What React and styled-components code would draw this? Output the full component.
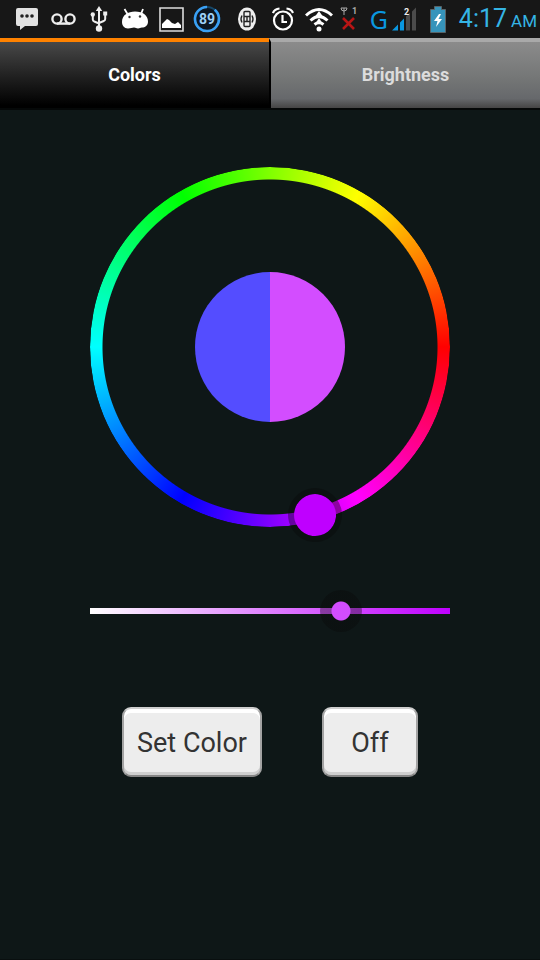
import React, { useState } from "react";
import styled, { createGlobalStyle } from "styled-components";

const GlobalStyle = createGlobalStyle`
  * { box-sizing: border-box; }
  body {
    margin: 0;
    background: #0e1717;
    font-family: Roboto, "Noto Sans", sans-serif;
  }
`;

const Screen = styled.div`
  display: flex;
  flex-direction: column;
  min-height: 100vh;
  background: #0e1717;
  border-bottom: 1px solid #090f0f;
`;

const StatusBar = styled.header`
  display: flex;
  justify-content: space-between;
  height: 38px;
  padding: 0 3px 0 9px;
  background: #171717;
  overflow: hidden;
`;

const StatusGroup = styled.div`
  display: flex;
  align-items: center;
`;

const Cell = styled.div`
  flex: none;
  display: flex;
  align-items: center;
  justify-content: ${(p) => p.$align || "center"};
  width: ${(p) => p.$width || 36}px;
  height: 38px;
`;

const Glyph = styled.svg`
  display: block;
  flex: none;
  font-family: Roboto, sans-serif;
`;

const Network = styled.span`
  width: 22px;
  font: 25px/34px "Noto Sans", sans-serif;
  color: #0a97e0;
`;

const Clock = styled.time`
  display: flex;
  align-items: baseline;
  gap: 4px;
  font-size: 25px;
  line-height: 38px;
  padding-top: 2px;
  color: #35b5e5;
`;

const Meridiem = styled.span`
  font-size: 17px;
`;

const TabBar = styled.div`
  display: flex;
  height: 72px;
  padding-bottom: 2px;
  background: #050808;
`;

const Tab = styled.button`
  flex: 1 1 0;
  height: 70px;
  padding: 0 0 1px;
  border: 0;
  border-top: 4px solid ${(p) => (p["aria-selected"] ? "#ff8200" : "#a9a9a9")};
  background: ${(p) =>
    p["aria-selected"]
      ? "linear-gradient(#484848, #222 50%, #000 96%)"
      : "linear-gradient(#8b8b8b, #747676 55%, #66686b 86%, #454545 100%)"};
  color: ${(p) => (p["aria-selected"] ? "#fff" : "#dcdcdc")};
  font: bold 18px/24px Roboto, sans-serif;

  & + & {
    border-left: 2px solid #000;
  }
`;

const Picker = styled.main`
  display: flex;
  flex-direction: column;
  align-items: center;
  padding: 57px 24px 24px;
`;

const Wheel = styled.div`
  position: relative;
  display: grid;
  place-items: center;
  width: 360px;
  height: 360px;
`;

const Ring = styled.div`
  grid-area: 1 / 1;
  width: 360px;
  height: 360px;
  border-radius: 50%;
  background: conic-gradient(from 90deg, #f00, #f0f, #00f, #0ff, #0f0, #ff0, #f00);
  mask: radial-gradient(closest-side, transparent 167px, #000 168px);
`;

const Swatches = styled.div`
  grid-area: 1 / 1;
  display: flex;
  width: 150px;
  height: 150px;
  border-radius: 50%;
  overflow: hidden;
`;

const Swatch = styled.div`
  flex: 1;
`;

const HueKnob = styled.div`
  position: absolute;
  left: 50%;
  top: 50%;
  width: 54px;
  height: 54px;
  margin: -27px;
  border: 6px solid rgba(8, 8, 8, 0.38);
  border-radius: 50%;
  background-clip: padding-box;
`;

const HueInput = styled.input`
  position: absolute;
  inset: 0;
  width: 100%;
  height: 100%;
  margin: 0;
  opacity: 0;
`;

const Saturation = styled.input`
  appearance: none;
  display: block;
  width: 402px;
  height: 42px;
  margin: 63px 0 0;
  background: linear-gradient(90deg, #fff, var(--pure)) center / calc(100% - 42px) 6px no-repeat;

  &::-webkit-slider-thumb {
    appearance: none;
    width: 42px;
    height: 42px;
    border-radius: 50%;
    background: radial-gradient(
      circle closest-side,
      var(--mixed) 9px,
      rgba(8, 8, 8, 0.38) 10px
    );
  }
`;

const Actions = styled.div`
  display: flex;
  gap: 60px;
  margin-top: 75px;
`;

const ActionButton = styled.button`
  min-width: 96px;
  height: 70px;
  padding: 2px 13px 0;
  border: 2px solid #a3a3a3;
  border-top-color: #cfcfcf;
  border-bottom-color: #858585;
  border-radius: 9px;
  background: #ededed;
  box-shadow: inset 0 4px 0 #fff, inset 0 -3px 0 #cfcfcf;
  color: #333;
  font: 27px/36px Roboto, sans-serif;
`;

function Chat() {
  return (
    <Glyph width="22" height="22" viewBox="0 0 22 22">
      <path d="M2 0h18q2 0 2 2v14q0 2-2 2H9l-5 4v-4H2q-2 0-2-2V2q0-2 2-2z" fill="#e2e2e2" />
      <g fill="#222"><circle cx="6" cy="8" r="1.8" /><circle cx="11" cy="8" r="1.8" /><circle cx="16" cy="8" r="1.8" /></g>
    </Glyph>
  );
}

function Voicemail() {
  return (
    <Glyph width="25" height="12" viewBox="0 0 25 12" fill="none" stroke="#eee" strokeWidth="2.4">
      <circle cx="6" cy="6" r="4.6" /><circle cx="19" cy="6" r="4.6" /><path d="M6 10.6h13" />
    </Glyph>
  );
}

function Usb() {
  return (
    <Glyph width="18" height="26" viewBox="0 0 18 26" fill="#eee">
      <path d="M9 0l3.200 5H5.800z" /><circle cx="9" cy="22.500" r="3.200" />
      <path d="M9 4v18M2.800 9v4.500q0 1.500 1.500 2l4.700 2M15.200 8v5q0 1.500-1.500 2L9 17" fill="none" stroke="#eee" strokeWidth="2" />
      <circle cx="2.800" cy="8.500" r="2.200" /><path d="M13.200 5.500h4v4h-4z" />
    </Glyph>
  );
}

function Robot() {
  return (
    <Glyph width="28" height="22" viewBox="0 0 28 22">
      <path d="M3.500 1l3 5M22 1l-2 5" stroke="#fff" strokeWidth="1.800" />
      <path d="M1 14C1 7 7 3.500 14 3.500c8 0 13 4 13 10 0 4-3 6-6 6-2 0-2 1-4 1s-2-1-4-1-3 1-6 1c-4 0-6-3-6-6.500z" fill="#fff" />
      <circle cx="8.500" cy="9" r="1.200" fill="#333" /><circle cx="19" cy="8.500" r="1.200" fill="#333" />
    </Glyph>
  );
}

function Picture() {
  return (
    <Glyph width="25" height="25" viewBox="0 0 25 25">
      <path d="M1 1h23v23H1z" fill="none" stroke="#ddd" strokeWidth="1.600" />
      <path d="M3 21v-4l4-4 1-1 2 1 3 3 3 1 3-2 3 3v3z" fill="#fff" />
    </Glyph>
  );
}

function Percent() {
  return (
    <Glyph width="28" height="28" viewBox="0 0 28 28">
      <circle cx="14" cy="14" r="12" fill="#0c1620" stroke="#174767" strokeWidth="2" />
      <circle cx="14" cy="14" r="12" fill="none" stroke="#3aa0f4" strokeWidth="2.600" pathLength="100" strokeDasharray="89 11" transform="rotate(-50 14 14)" />
      <text x="14" y="19" textAnchor="middle" fontSize="14" fontWeight="700" fill="#9fd0f5">89</text>
    </Glyph>
  );
}

function Vibrate() {
  return (
    <Glyph width="18" height="24" viewBox="0 0 18 24">
      <ellipse cx="9" cy="12" rx="9" ry="11.500" fill="#eee" />
      <g fill="none" stroke="#222" strokeWidth="1.400">
        <rect x="6" y="4.500" width="6" height="15" rx="1" />
        <path d="M6 9.500h6M6 14.500h6M9 9.500v5M4 8.500q-2 3.500 0 7M14 8.500q2 3.500 0 7" />
      </g>
    </Glyph>
  );
}

function Alarm() {
  return (
    <Glyph width="22" height="24" viewBox="0 0 22 24" fill="none" stroke="#fff" strokeWidth="2.200">
      <circle cx="11" cy="13.500" r="9" /><path d="M10.500 8v7h4.500M1 6Q2.500 2 7.500 1.500M14.500 1.500q5 .5 6.500 4.500" />
    </Glyph>
  );
}

function Wifi() {
  return (
    <Glyph width="28" height="25" viewBox="0 0 28 25" fill="none" stroke="#fff" strokeWidth="3">
      <path d="M1 8.500q13-12 26 0M5.500 13.500q8.500-8 17 0M9.500 17.500q4.500-3.500 9 0" />
      <circle cx="14" cy="22" r="2.500" fill="#fff" stroke="none" />
      <path d="M14 4l-5 7h10zM14 11l-4 6h8z" fill="#fff" stroke="none" />
    </Glyph>
  );
}

function NoSignal() {
  return (
    <Glyph width="18" height="26" viewBox="0 0 18 26">
      <path d="M1 2h6M4 2v7M1 2q0 3 3 3t3-3" fill="none" stroke="#aaa" strokeWidth="1" />
      <text x="12" y="8" fontSize="9" fontWeight="700" fill="#aaa">1</text>
      <path d="M3 12l11 11M14 12L3 23" stroke="#b71515" strokeWidth="2.600" />
    </Glyph>
  );
}

function Signal() {
  return (
    <Glyph width="25" height="24" viewBox="0 0 25 24">
      <path d="M0 23.500l6-6v6zM8 15.500l4-4v12H8z" fill="#0a97e0" />
      <path d="M14 9.500l4-4v18h-4zM20 4.500l4-4v23h-4z" fill="#4b4b4b" />
      <text x="12" y="8" fontSize="9" fontWeight="700" fill="#eee">2</text>
    </Glyph>
  );
}

function Battery() {
  return (
    <Glyph width="16" height="27" viewBox="0 0 16 27">
      <path d="M4.500.5h7v3h4v23H.5v-23h4z" fill="#3694bb" stroke="#596367" />
      <path d="M9 8l-5 7h3.500L6 21l6-8H8.500L11 8z" fill="#fff" />
    </Glyph>
  );
}

export default function App() {
  const [tab, setTab] = useState("Colors");
  const [hue, setHue] = useState(285);
  const [saturation, setSaturation] = useState(251);
  const pure = `hsl(${hue} 100% 50%)`;
  const mixed = `hsl(${hue} 100% ${100 - (saturation / 360) * 50}%)`;

  return (
    <>
      <GlobalStyle />
      <Screen>
        <StatusBar>
          <StatusGroup>
            <Cell><Chat /></Cell>
            <Cell><Voicemail /></Cell>
            <Cell><Usb /></Cell>
            <Cell><Robot /></Cell>
            <Cell><Picture /></Cell>
            <Cell><Percent /></Cell>
          </StatusGroup>
          <StatusGroup>
            <Cell><Vibrate /></Cell>
            <Cell><Alarm /></Cell>
            <Cell><Wifi /></Cell>
            <Cell $width={24}><NoSignal /></Cell>
            <Cell $width={56} $align="flex-end">
              <Network>G</Network>
              <Signal />
            </Cell>
            <Cell $width={42}><Battery /></Cell>
            <Clock>4:17 <Meridiem>AM</Meridiem></Clock>
          </StatusGroup>
        </StatusBar>
        <TabBar role="tablist">
          {["Colors", "Brightness"].map((name) => (
            <Tab key={name} role="tab" aria-selected={tab === name} onClick={() => setTab(name)}>
              {name}
            </Tab>
          ))}
        </TabBar>
        <Picker>
          <Wheel>
            <Ring />
            <Swatches>
              <Swatch style={{ background: "#544dff" }} />
              <Swatch style={{ background: mixed }} />
            </Swatches>
            <HueKnob
              style={{
                backgroundColor: pure,
                transform: `rotate(${-hue}deg) translateX(174px)`,
              }}
            />
            <HueInput
              type="range"
              aria-label="Hue"
              min="0"
              max="360"
              value={hue}
              onChange={(e) => setHue(Number(e.target.value))}
            />
          </Wheel>
          <Saturation
            type="range"
            aria-label="Saturation"
            min="0"
            max="360"
            value={saturation}
            onChange={(e) => setSaturation(Number(e.target.value))}
            style={{ "--pure": pure, "--mixed": mixed }}
          />
          <Actions>
            <ActionButton type="button">Set Color</ActionButton>
            <ActionButton type="button">Off</ActionButton>
          </Actions>
        </Picker>
      </Screen>
    </>
  );
}
